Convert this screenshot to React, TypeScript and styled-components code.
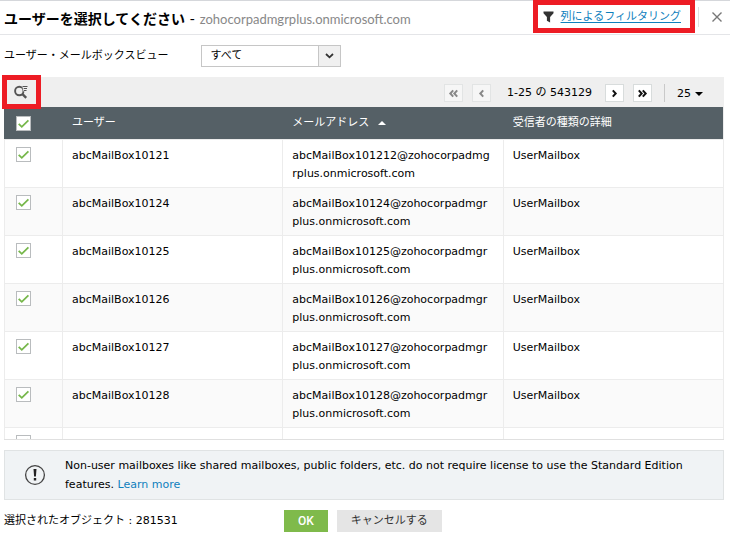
import React, { useState } from "react";
import styled, { createGlobalStyle, css } from "styled-components";

const GlobalStyle = createGlobalStyle`
  *, *::before, *::after { box-sizing: border-box; }
  body {
    margin: 0;
    background: #fff;
    color: #000;
    font: 11px/18px "DejaVu Sans", "Noto Sans CJK JP", sans-serif;
  }
  button, select, input { font: inherit; color: inherit; }
`;

const Dialog = styled.main`
  display: flex;
  flex-direction: column;
  border-top: 1px solid #d5d7db;
`;

const Header = styled.header`
  display: flex;
  align-items: flex-start;
  height: 34px;
  padding-left: 4px;
  border-bottom: 1px solid #e4e5e8;
`;

const Title = styled.h1`
  flex: 1;
  margin: 0;
  font-size: 14px;
  line-height: 36px;
  white-space: nowrap;
`;

const Dash = styled.span`
  font-weight: 400;
`;

const Domain = styled.span`
  color: #888;
  font-family: Lato, sans-serif;
  font-size: 13px;
  font-weight: 400;
`;

const highlight = css`
  border: 5px solid #ed1c24;
`;

const FilterBox = styled.div`
  ${highlight}
  display: flex;
  align-items: center;
  gap: 7px;
  height: 33px;
  margin-top: -1px;
  padding: 0 9px 0 5px;
`;

const Link = styled.a`
  color: #0e80bd;
`;

const FilterLink = styled(Link)`
  text-underline-offset: 2px;
`;

const CloseButton = styled.button`
  display: flex;
  align-items: center;
  justify-content: center;
  width: 32px;
  height: 20px;
  margin: 6px 0 0 3px;
  padding: 0 0 0 4px;
  border: 0;
  border-left: 1px solid #e0e0e0;
  background: none;
`;

const ViewRow = styled.div`
  display: flex;
  align-items: center;
  gap: 33px;
  height: 42px;
  padding-left: 4px;
`;

const SelectWrap = styled.span`
  display: grid;
  grid-template-columns: 1fr 22px;
  width: 140px;
  height: 22px;
  border: 1px solid #c6c6c6;
`;

const Select = styled.select`
  grid-area: 1 / 1 / 2 / 3;
  appearance: none;
  padding: 0 28px 0 8px;
  border: 0;
  border-radius: 0;
  background: none;
`;

const SelectArrow = styled.span`
  grid-area: 1 / 2 / 2 / 3;
  display: flex;
  align-items: center;
  justify-content: center;
  border-left: 1px solid #c6c6c6;
  background: #f0f0f0;
  pointer-events: none;
`;

const Toolbar = styled.div`
  display: flex;
  align-items: center;
  justify-content: space-between;
  height: 30px;
  margin: 0 6px 0 2px;
  background: linear-gradient(to right, transparent 2px, #efefef 2px);
`;

const SearchButton = styled.button`
  ${highlight}
  position: relative;
  display: flex;
  align-items: center;
  justify-content: center;
  width: 39px;
  height: 34px;
  padding: 0 2px 0 0;
  background: #efefef;
`;

const Pager = styled.nav`
  display: flex;
  align-items: center;
  padding: 2px 21px 0 0;
`;

const PageButton = styled.button<{ $gap: number }>`
  display: flex;
  align-items: center;
  justify-content: center;
  width: 19px;
  height: 18px;
  margin-right: ${(p) => p.$gap}px;
  padding: 0;
  border: 1px solid #d8dcdc;
  background: #fff;
  color: #111;

  &:disabled {
    border-color: #e2e4e4;
    background: #f6f6f6;
    color: #888;
  }
`;

const Range = styled.span`
  margin-right: 13px;
`;

const PageSize = styled.button`
  display: flex;
  align-items: center;
  gap: 4px;
  height: 18px;
  padding: 2px 0 0 12px;
  border: 0;
  border-left: 1px solid #c9c9c9;
  background: none;
`;

const TableArea = styled.div`
  height: 333px;
  margin: 0 6px 0 4px;
  overflow: hidden;
  border-bottom: 1px solid #e0e0e0;
`;

const Table = styled.table`
  width: 100%;
  table-layout: fixed;
  border-collapse: separate;
  border-spacing: 0;
  border-right: 1px solid #ececec;
`;

const HeadCell = styled.th<{ $check?: boolean }>`
  width: ${(p) => (p.$check ? "58px" : "auto")};
  height: 33px;
  padding: 0 10px;
  border-bottom: 1px solid #ececec;
  background: #556066;
  background-clip: padding-box;
  color: #fff;
  font-weight: 400;
  text-align: left;
`;

const Row = styled.tr`
  &:nth-child(even) {
    background: #fafafa;
  }
`;

const Cell = styled.td`
  height: 48px;
  padding: 7px 9px 4px;
  border-bottom: 1px solid #ececec;
  border-left: 1px solid #ececec;
  vertical-align: top;
  overflow-wrap: anywhere;
`;

const CheckCell = styled(Cell)`
  padding-left: 10px;
`;

const Checkbox = styled.input`
  display: block;
  appearance: none;
  width: 15px;
  height: 15px;
  margin: 0 0 0 1px;
  border: 1px solid #b9bcbe;
  background: #fff;

  th & {
    margin-left: 2px;
  }

  &:checked {
    background: #fff
      url("data:image/svg+xml,%3Csvg xmlns='http://www.w3.org/2000/svg' viewBox='0 0 13 13'%3E%3Cpath d='M1.7 6.8l3.1 3L11.4 3.4' fill='none' stroke='%2376b74a' stroke-width='1.8'/%3E%3C/svg%3E");
  }
`;

const HeadLabel = styled.span`
  display: flex;
  align-items: center;
  gap: 9px;
`;

const Notice = styled.section`
  display: flex;
  align-items: center;
  gap: 19px;
  height: 50px;
  margin: 10px 6px 0 4px;
  padding: 0 19px;
  border: 1px solid #e0e3e4;
  background: #f0f3f5;
  line-height: 19px;
`;

const NoticeText = styled.p`
  flex: 1;
  margin: 0;
`;

const NoticeLink = styled(Link)`
  text-decoration: none;
`;

const Footer = styled.footer`
  display: grid;
  grid-template-columns: 280px auto auto 1fr;
  align-items: center;
  padding: 10px 4px 5px;
`;

const Action = styled.button<{ $primary?: boolean }>`
  height: 22px;
  margin-right: 9px;
  padding: 0 14px;
  border: 0;
  background: ${(p) => (p.$primary ? "#7fba4b" : "#e5e5e5")};
  color: ${(p) => (p.$primary ? "#fff" : "#333")};
  font-family: ${(p) => (p.$primary ? "Roboto" : '"DejaVu Sans"')}, "Noto Sans CJK JP", sans-serif;
  font-size: ${(p) => (p.$primary ? "12px" : "11px")};
  font-weight: ${(p) => (p.$primary ? 500 : 400)};
`;

const users = [
  ["abcMailBox10121", "abcMailBox101212@zohocorpadmgrplus.onmicrosoft.com"],
  ...["10124", "10125", "10126", "10127", "10128", "10129"].map((id) => [
    `abcMailBox${id}`,
    `abcMailBox${id}@zohocorpadmgrplus.onmicrosoft.com`,
  ]),
];

function Chevron({ double, back }: { double?: boolean; back?: boolean }) {
  return (
    <svg width="11" height="9" viewBox="0 0 11 9" fill="none" stroke="currentColor" strokeWidth="2" aria-hidden="true">
      <g transform={back ? "matrix(-1 0 0 1 11 0)" : undefined}>
        {double ? (
          <path d="M1.8 1.3l2.9 3.2-2.9 3.2M5.8 1.3l2.9 3.2-2.9 3.2" />
        ) : (
          <path d="M3.8 1.3l2.9 3.2-2.9 3.2" />
        )}
      </g>
    </svg>
  );
}

export default function App() {
  const [selected, setSelected] = useState<boolean[]>(users.map(() => true));
  const toggle = (index: number) => setSelected(selected.map((v, i) => (i === index ? !v : v)));
  const all = selected.every(Boolean);

  return (
    <>
      <GlobalStyle />
      <Dialog>
        <Header>
          <Title>
            ユーザーを選択してください <Dash>-</Dash> <Domain>zohocorpadmgrplus.onmicrosoft.com</Domain>
          </Title>
          <FilterBox>
            <svg width="11" height="12" viewBox="0 0 11 12" aria-hidden="true">
              <path d="M.5.5h10v1.7L7.1 6v5.5L3.9 9.8V6L.5 2.2z" fill="#333" />
            </svg>
            <FilterLink href="#filter">列によるフィルタリング</FilterLink>
          </FilterBox>
          <CloseButton aria-label="閉じる">
            <svg width="10" height="10" viewBox="0 0 10 10" stroke="#777" strokeWidth="1.4" aria-hidden="true">
              <path d="M.5.5l9 9M9.5.5l-9 9" />
            </svg>
          </CloseButton>
        </Header>

        <ViewRow>
          <label htmlFor="view">ユーザー・メールボックスビュー</label>
          <SelectWrap>
            <Select id="view">
              <option>すべて</option>
            </Select>
            <SelectArrow>
              <svg width="9" height="6" viewBox="0 0 9 6" fill="none" stroke="#333" strokeWidth="1.8" aria-hidden="true">
                <path d="M1 1l3.5 3.3L8 1" />
              </svg>
            </SelectArrow>
          </SelectWrap>
        </ViewRow>

        <Toolbar>
          <SearchButton aria-label="検索">
            <svg width="14" height="14" viewBox="0 0 14 14" fill="none" stroke="#555" aria-hidden="true">
              <circle cx="5.3" cy="6" r="4.2" strokeWidth="1.9" />
              <path d="M8.2 8.8l4 4" strokeWidth="2.4" />
              <path d="M8 .5h6v6H9.6z" fill="#efefef" stroke="none" />
              <path d="M8.5 1.5H13.5M9.7 3.5H13M10 5.5H12.5" />
            </svg>
          </SearchButton>
          <Pager aria-label="ページ">
            <PageButton $gap={9} disabled aria-label="最初"><Chevron double back /></PageButton>
            <PageButton $gap={16} disabled aria-label="前へ"><Chevron back /></PageButton>
            <Range>1-25 の 543129</Range>
            <PageButton $gap={9} aria-label="次へ"><Chevron /></PageButton>
            <PageButton $gap={12} aria-label="最後"><Chevron double /></PageButton>
            <PageSize>
              25
              <svg width="8" height="4" viewBox="0 0 8 4" aria-hidden="true"><path d="M0 0h8L4 4z" /></svg>
            </PageSize>
          </Pager>
        </Toolbar>

        <TableArea>
          <Table>
            <thead>
              <tr>
                <HeadCell $check>
                  <Checkbox
                    type="checkbox"
                    aria-label="すべて選択"
                    checked={all}
                    onChange={() => setSelected(users.map(() => !all))}
                  />
                </HeadCell>
                <HeadCell>ユーザー</HeadCell>
                <HeadCell>
                  <HeadLabel>
                    メールアドレス
                    <svg width="8" height="4" viewBox="0 0 8 4" fill="#fff" aria-hidden="true"><path d="M0 4h8L4 0z" /></svg>
                  </HeadLabel>
                </HeadCell>
                <HeadCell>受信者の種類の詳細</HeadCell>
              </tr>
            </thead>
            <tbody>
              {users.map(([name, mail], i) => (
                <Row key={name}>
                  <CheckCell>
                    <Checkbox type="checkbox" aria-label={name} checked={selected[i]} onChange={() => toggle(i)} />
                  </CheckCell>
                  <Cell>{name}</Cell>
                  <Cell>{mail}</Cell>
                  <Cell>UserMailbox</Cell>
                </Row>
              ))}
            </tbody>
          </Table>
        </TableArea>

        <Notice>
          <svg width="22" height="22" viewBox="0 0 22 22" aria-hidden="true">
            <circle cx="11" cy="11" r="9.4" fill="none" stroke="#444" strokeWidth="1.3" />
            <path d="M9.5 5h3l-.6 7.4h-1.8zM9.8 14h2.4v2.4H9.8z" fill="#222" />
          </svg>
          <NoticeText>
            Non-user mailboxes like shared mailboxes, public folders, etc. do not require license to use the Standard
            Edition features. <NoticeLink href="#learn-more">Learn more</NoticeLink>
          </NoticeText>
        </Notice>

        <Footer>
          <span>選択されたオブジェクト : 281531</span>
          <Action $primary>OK</Action>
          <Action>キャンセルする</Action>
        </Footer>
      </Dialog>
    </>
  );
}
